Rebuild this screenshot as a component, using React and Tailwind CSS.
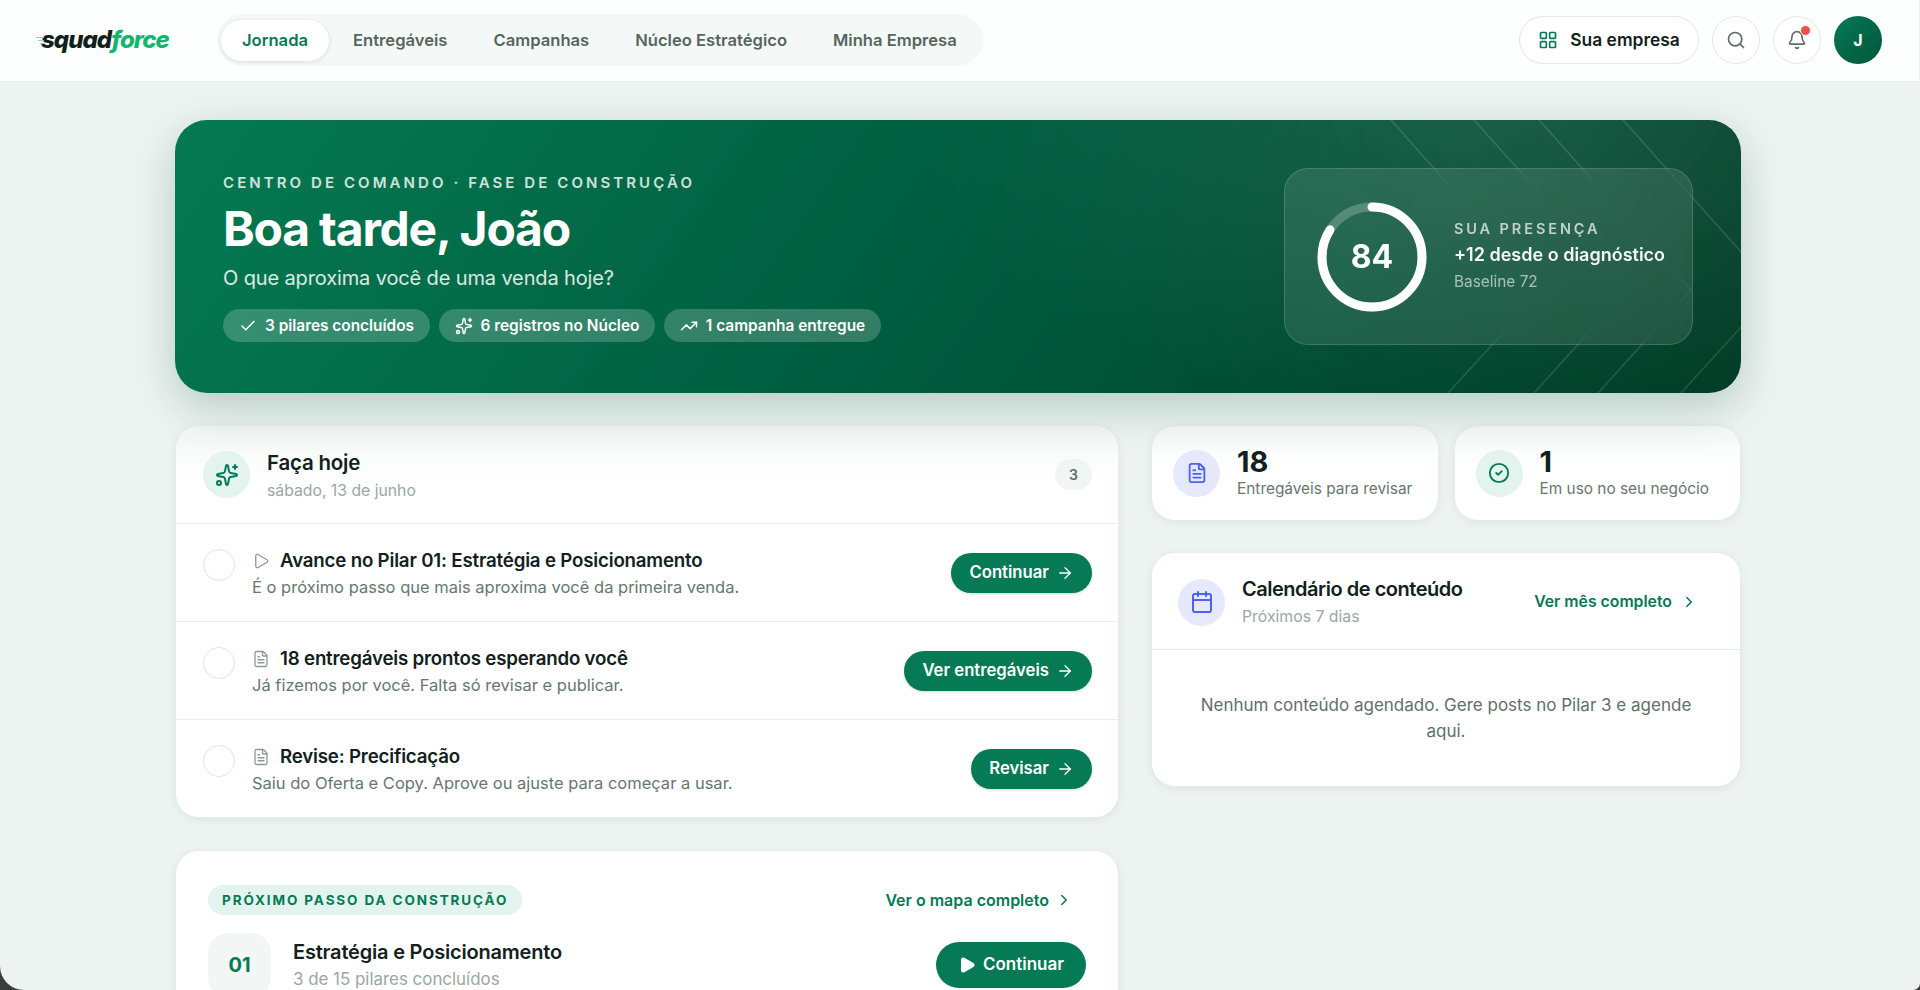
import React from 'react';
import { Check, Sparkles, TrendingUp, Play, FileText, ArrowRight, ChevronRight, Calendar, CircleCheck, LayoutGrid, Search, Bell } from 'lucide-react';

const NAV = ['Jornada', 'Entregáveis', 'Campanhas', 'Núcleo Estratégico', 'Minha Empresa'];

function Header() {
  return (
    <header className="h-[82px] w-[1919px] shrink-0 bg-[#fdfefe] border-b border-[#e4ecea] flex items-center justify-between pl-[41px] pr-[37px] pb-px">
      <div className="flex items-center gap-[49px]">
        <div className="relative w-[127px] text-[24px] leading-none font-extrabold italic tracking-[-0.04em] whitespace-nowrap">
          <span className="text-[#10201b]">squad</span>
          <span className="text-[#12b76f]">force</span>
          <svg className="absolute left-[-5px] top-[8px]" width="12" height="10" viewBox="0 0 12 10" fill="none">
            <path d="M0 1.5h8M2 4.5h6M4 7.5h4" stroke="#8fd4b8" strokeWidth="1.2" />
          </svg>
        </div>
        <nav className="h-[52px] flex items-center gap-0.5 rounded-full bg-[#f4f8f6] px-1">
          {NAV.map((n, i) => (
            <a key={n} className={i === 0
              ? 'h-[41px] flex items-center px-[21px] rounded-full bg-white text-[#057a55] text-[16.6px] font-semibold shadow-[0_1px_4px_rgba(16,50,40,0.12)]'
              : 'h-[41px] flex items-center px-[22px] rounded-full text-[#56665f] text-[16.6px] font-semibold'}>{n}</a>
          ))}
        </nav>
      </div>
      <div className="flex items-center gap-[13px]">
        <button className="h-[48px] w-[180px] flex items-center justify-center gap-[12px] rounded-full bg-white border-[1.5px] border-[#e0e9e6] text-[17.4px] font-semibold text-[#12211c]">
          <LayoutGrid size={20} className="text-[#057a55]" strokeWidth={2} />
          Sua empresa
        </button>
        <button className="h-[48px] w-[48px] flex items-center justify-center rounded-full bg-white border-[1.5px] border-[#e0e9e6] text-[#5d6f68]">
          <Search size={20} strokeWidth={2} />
        </button>
        <button className="relative h-[48px] w-[48px] flex items-center justify-center rounded-full bg-white border-[1.5px] border-[#e0e9e6] text-[#5d6f68]">
          <Bell size={20} strokeWidth={2} />
          <span className="absolute top-[8px] right-[9px] w-[9px] h-[9px] rounded-full bg-[#ef4f4f] border border-white box-content" />
        </button>
        <div className="h-[48px] w-[48px] flex items-center justify-center rounded-full bg-[linear-gradient(135deg,#057a55,#00563b)] text-white text-[16px] font-bold">J</div>
      </div>
    </header>
  );
}

function Chip({ icon: Icon, children }) {
  return (
    <span className="h-[33px] flex items-center gap-[8px] pl-[16px] pr-[16px] rounded-full bg-white/20 text-white text-[15.4px] font-semibold whitespace-nowrap">
      <Icon size={18} strokeWidth={2} />
      {children}
    </span>
  );
}

function Ring() {
  const r = 50;
  const c = 2 * Math.PI * r;
  return (
    <div className="relative w-[110px] h-[110px] shrink-0 flex items-center justify-center">
      <svg className="absolute inset-0 -rotate-90" width="110" height="110" viewBox="0 0 110 110" fill="none">
        <circle cx="55" cy="55" r={r} stroke="rgba(255,255,255,0.22)" strokeWidth="9" />
        <circle cx="55" cy="55" r={r} stroke="#fff" strokeWidth="9" strokeLinecap="round" strokeDasharray={c} strokeDashoffset={c * 0.16} />
      </svg>
      <span className="text-white text-[32px] font-bold">84</span>
    </div>
  );
}

function Hero() {
  const chevrons = [
    'M1216 0L1367 170L1273 273',
    'M1299 0L1452 170L1359 273',
    'M1364 0L1516 170L1423 273',
    'M1448 0L1600 170L1506 273',
  ];
  return (
    <section className="relative h-[273px] rounded-[32px] overflow-hidden flex items-center justify-between px-12 bg-[linear-gradient(125deg,#057a52_0%,#005f40_45%,#003b26_100%)] shadow-[0_14px_44px_rgba(4,80,55,0.24)]">
      <div className="absolute inset-0 bg-[radial-gradient(ellipse_600px_300px_at_85%_0%,rgba(255,255,255,0.1),transparent)]" />
      <svg className="absolute inset-0" width="1566" height="273" fill="none">
        {chevrons.map((d) => <path key={d} d={d} stroke="rgba(255,255,255,0.14)" strokeWidth="1.5" />)}
      </svg>
      <div className="relative pt-[2px]">
        <p className="text-[15px] leading-[20px] font-semibold tracking-[0.205em] text-white/80 whitespace-nowrap">CENTRO DE COMANDO · FASE DE CONSTRUÇÃO</p>
        <h1 className="mt-[8px] text-[48px] leading-[56px] font-bold tracking-[-0.025em] text-white whitespace-nowrap">Boa tarde, João</h1>
        <p className="mt-[7px] text-[20px] leading-[28px] tracking-[-0.13px] text-white/85 whitespace-nowrap">O que aproxima você de uma venda hoje?</p>
        <div className="mt-[17px] flex gap-[8.5px]">
          <Chip icon={Check}>3 pilares concluídos</Chip>
          <Chip icon={Sparkles}>6 registros no Núcleo</Chip>
          <Chip icon={TrendingUp}>1 campanha entregue</Chip>
        </div>
      </div>
      <div className="relative w-[409px] h-[177px] rounded-[24px] border border-white/15 bg-white/10 backdrop-blur-lg flex items-center gap-[27px] pl-[32px]">
        <Ring />
        <div className="-mt-[2px]">
          <p className="text-[14.5px] leading-[20px] font-semibold tracking-[0.2em] text-white/70 whitespace-nowrap">SUA PRESENÇA</p>
          <p className="mt-[3px] text-[18px] leading-[26px] font-semibold text-white/95 whitespace-nowrap">+12 desde o diagnóstico</p>
          <p className="mt-[4px] text-[15.4px] leading-[20px] text-white/60 whitespace-nowrap">Baseline 72</p>
        </div>
      </div>
    </section>
  );
}

function Task({ icon: Icon, title, sub, cta }) {
  return (
    <div className="h-[98px] border-t-[1.5px] border-[#e9efed] flex items-center justify-between pl-[27px] pr-[26px]">
      <div className="flex items-start gap-[17px] self-start pt-[24px]">
        <span className="w-[32px] h-[32px] mt-px rounded-full border-[1.5px] border-[#e0e5e3] shrink-0" />
        <div>
          <div className="flex items-center gap-[10px]">
            <Icon size={18} className="text-[#8b9c96]" strokeWidth={1.75} />
            <h3 className="text-[18.7px] leading-[26px] font-semibold tracking-[-0.01em] text-[#12211c] whitespace-nowrap">{title}</h3>
          </div>
          <p className="mt-px text-[16.5px] leading-[24px] text-[#68776f] whitespace-nowrap">{sub}</p>
        </div>
      </div>
      <button className="h-[40px] flex items-center gap-[7px] px-[18px] rounded-full bg-[#057a55] text-white text-[16.7px] font-semibold shadow-[0_1px_3px_rgba(5,80,55,0.2)] whitespace-nowrap">
        {cta}
        <ArrowRight size={18} strokeWidth={1.75} />
      </button>
    </div>
  );
}

function Card({ className = '', children }) {
  return <div className={'rounded-[24px] bg-white border border-[#e6ecea] shadow-[0_2px_8px_rgba(16,50,40,0.07)] overflow-hidden ' + className}>{children}</div>;
}

function TodayCard() {
  return (
    <Card>
      <div className="h-[97px] flex items-center justify-between pl-[27px] pr-[26px] bg-[linear-gradient(180deg,#f3f6f5_0%,#ffffff_55%)]">
        <div className="flex items-center gap-[17px]">
          <span className="w-[47px] h-[47px] rounded-full bg-[#e2f4ed] flex items-center justify-center text-[#057a55]">
            <Sparkles size={24} strokeWidth={2} />
          </span>
          <div className="pt-[2px]">
            <h2 className="text-[20.5px] leading-[28px] font-semibold tracking-[-0.01em] text-[#12211c]">Faça hoje</h2>
            <p className="mt-[2px] text-[15.75px] leading-[24px] text-[#9aa8a3]">sábado, 13 de junho</p>
          </div>
        </div>
        <span className="w-[37px] h-[31px] rounded-full bg-[#f1f5f3] flex items-center justify-center text-[14px] font-semibold text-[#5d6f68]">3</span>
      </div>
      <Task icon={Play} title="Avance no Pilar 01: Estratégia e Posicionamento" sub="É o próximo passo que mais aproxima você da primeira venda." cta="Continuar" />
      <Task icon={FileText} title="18 entregáveis prontos esperando você" sub="Já fizemos por você. Falta só revisar e publicar." cta="Ver entregáveis" />
      <Task icon={FileText} title="Revise: Precificação" sub="Saiu do Oferta e Copy. Aprove ou ajuste para começar a usar." cta="Revisar" />
    </Card>
  );
}

function NextStep() {
  return (
    <Card className="px-8 pt-[34px] h-[240px]">
      <div className="flex items-center justify-between h-[30px]">
        <span className="h-[30px] flex items-center px-[14px] rounded-full bg-[#e2f4ed] text-[#057a55] text-[13.5px] font-bold tracking-[0.14em] whitespace-nowrap">PRÓXIMO PASSO DA CONSTRUÇÃO</span>
        <a className="flex items-center gap-[6px] pr-[13px] text-[16px] font-semibold text-[#057a55] whitespace-nowrap">Ver o mapa completo <ChevronRight size={18} strokeWidth={2} /></a>
      </div>
      <div className="mt-[18px] flex items-center justify-between">
        <div className="flex items-center gap-[22px]">
          <span className="w-[63px] h-[64px] rounded-[20px] bg-[#f2f6f4] flex items-center justify-center text-[20px] font-bold text-[#057a55]">01</span>
          <div>
            <h3 className="text-[20px] leading-[28px] font-semibold tracking-[-0.01em] text-[#12211c] whitespace-nowrap">Estratégia e Posicionamento</h3>
            <p className="text-[16.9px] leading-[26px] text-[#9aa8a3] whitespace-nowrap">3 de 15 pilares concluídos</p>
          </div>
        </div>
        <button className="h-[46px] w-[150px] flex items-center justify-center gap-[7px] rounded-full bg-[#057a55] text-white text-[17px] font-semibold">
          <Play size={18} fill="currentColor" strokeWidth={2} />
          Continuar
        </button>
      </div>
    </Card>
  );
}

function Stat({ icon: Icon, tint, num, label }) {
  return (
    <div className="h-[96px] rounded-[24px] border border-[#e6ecea] bg-[linear-gradient(180deg,#f5f8f7_0%,#ffffff_45%)] shadow-[0_2px_8px_rgba(16,50,40,0.07)] flex items-center gap-[17px] pl-[21px]">
      <span className={'w-[47px] h-[47px] shrink-0 rounded-full flex items-center justify-center ' + tint}>
        <Icon size={22} strokeWidth={2} />
      </span>
      <div>
        <p className="text-[29px] leading-[32px] font-bold text-[#12211c]">{num}</p>
        <p className="text-[15.4px] leading-[22px] text-[#68776f] whitespace-nowrap">{label}</p>
      </div>
    </div>
  );
}

function CalendarCard() {
  return (
    <Card>
      <div className="h-[97px] flex items-center justify-between pl-[26px] pr-[42px] pt-[2px] border-b border-[#e6ecea]">
        <div className="flex items-center gap-[17px]">
          <span className="w-[47px] h-[47px] rounded-full bg-[#e6e9fd] flex items-center justify-center text-[#4a62f5]">
            <Calendar size={24} strokeWidth={2} />
          </span>
          <div className="-mt-px">
            <h2 className="text-[20px] leading-[28px] font-semibold tracking-[-0.024em] text-[#12211c] whitespace-nowrap">Calendário de conteúdo</h2>
            <p className="mt-[2px] text-[15.8px] leading-[24px] text-[#9aa8a3]">Próximos 7 dias</p>
          </div>
        </div>
        <a className="flex items-center gap-[8px] text-[15.8px] font-semibold text-[#057a55] whitespace-nowrap">Ver mês completo <ChevronRight size={18} strokeWidth={2} /></a>
      </div>
      <div className="h-[136px] flex items-center justify-center px-[40px]">
        <p className="text-center text-[17px] leading-[26px] text-[#5f6f69]">Nenhum conteúdo agendado. Gere posts no Pilar 3 e agende aqui.</p>
      </div>
    </Card>
  );
}

export default function App() {
  return (
    <div className="h-screen overflow-hidden bg-[#3a3d3c] font-[Inter,sans-serif]">
      <div className="h-full overflow-hidden bg-[#edf3f1] rounded-bl-[24px] rounded-br-[7px] flex flex-col">
        <Header />
        <main className="pl-[175px] pr-[179px] pt-[38px]">
          <Hero />
          <div className="mt-[32px] grid grid-cols-[944px_590px] gap-[32px]">
            <div className="flex flex-col gap-[32px]">
              <TodayCard />
              <NextStep />
            </div>
            <div className="flex flex-col gap-[31px]">
              <div className="grid grid-cols-2 gap-[15px]">
                <Stat icon={FileText} tint="bg-[#e6e9fd] text-[#4a62f5]" num="18" label="Entregáveis para revisar" />
                <Stat icon={CircleCheck} tint="bg-[#e2f4ed] text-[#057a55]" num="1" label="Em uso no seu negócio" />
              </div>
              <CalendarCard />
            </div>
          </div>
        </main>
      </div>
    </div>
  );
}
